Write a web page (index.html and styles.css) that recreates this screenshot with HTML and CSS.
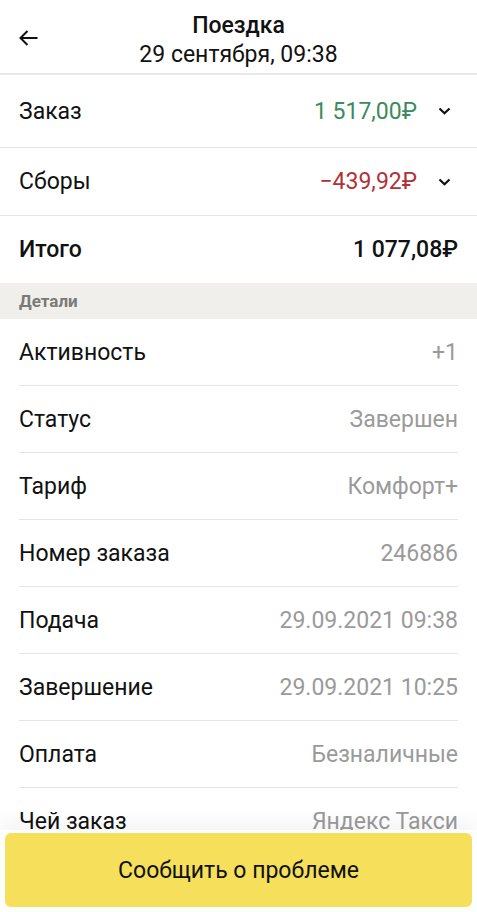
FILE: index.html
```html
<!DOCTYPE html>
<html>
<head>
    <title>Поездка</title>
    <link rel="stylesheet" href="styles.css">
</head>
<body>
    <div class="header">
        <button class="back" aria-label="Назад">
            <svg width="19" height="16" viewBox="0 0 19 16"><path d="M8.5 1 1.5 8l7 7M1.5 8H18.5" fill="none" stroke="#111" stroke-width="2"/></svg>
        </button>
        <div class="title">Поездка</div>
        <div class="subtitle">29 сентября, 09:38</div>
    </div>

    <div class="card">
        <div class="sum-row first">
            <span class="label">Заказ</span>
            <span class="amount green">1 517,00₽</span>
            <svg class="chevron" width="13" height="8" viewBox="0 0 13 8"><path d="M1.5 1.5 6.5 6.2l5-4.7" fill="none" stroke="#111" stroke-width="2.2"/></svg>
        </div>
        <div class="sum-row">
            <span class="label">Сборы</span>
            <span class="amount red">−439,92₽</span>
            <svg class="chevron" width="13" height="8" viewBox="0 0 13 8"><path d="M1.5 1.5 6.5 6.2l5-4.7" fill="none" stroke="#111" stroke-width="2.2"/></svg>
        </div>
        <div class="sum-row total">
            <span class="label">Итого</span>
            <span class="amount">1 077,08₽</span>
        </div>

        <div class="section">Детали</div>

        <div class="details">
            <div class="row"><span>Активность</span><span class="value">+1</span></div>
            <div class="row"><span>Статус</span><span class="value">Завершен</span></div>
            <div class="row"><span>Тариф</span><span class="value">Комфорт+</span></div>
            <div class="row"><span>Номер заказа</span><span class="value">246886</span></div>
            <div class="row"><span>Подача</span><span class="value">29.09.2021 09:38</span></div>
            <div class="row"><span>Завершение</span><span class="value">29.09.2021 10:25</span></div>
            <div class="row"><span>Оплата</span><span class="value">Безналичные</span></div>
            <div class="row"><span>Чей заказ</span><span class="value">Яндекс Такси</span></div>
        </div>
    </div>

    <div class="footer">
        <button class="report">Сообщить о проблеме</button>
    </div>
</body>
</html>
```

FILE: styles.css
```css
body { margin: 0; font-family: Roboto, "Noto Sans", sans-serif; color: #111; background: #fff; height: 912px; overflow: hidden; position: relative; }

.header { height: 75px; position: relative; text-align: center; border-bottom: 2px solid #e9e9e7; box-sizing: border-box; }
.title { padding-top: 12px; font-size: 23px; font-weight: 500; line-height: 28px; }
.subtitle { font-size: 23px; line-height: 30px; }
.back { position: absolute; left: 19px; top: 30px; background: none; border: none; padding: 0; width: 19px; height: 16px; line-height: 0; }

.card { border-radius: 10px 10px 0 0; }

.sum-row { display: flex; align-items: center; height: 67px; padding: 0 26px 0 19px; border-bottom: 1px solid #e4e4e2; font-size: 23px; }
.sum-row.first { height: 72px; }
.sum-row .label { flex: 1; }
.sum-row .chevron { margin-left: 21px; }
.sum-row.total { border-bottom: none; font-weight: 500; padding-right: 19px; height: 67px; }
.green { color: #3d8a5c; }
.red { color: #b03236; }

.section { background: #f0efeb; height: 36px; line-height: 36px; padding: 0 19px; font-size: 17px; font-weight: 700; color: #7a7a78; }

.details { padding: 0 19px; }
.row { display: flex; justify-content: space-between; align-items: center; height: 66px; border-bottom: 1px solid #e4e4e2; font-size: 23px; }
.row .value { color: #9a9a9a; }

.footer { position: absolute; left: 0; right: 0; bottom: 0; padding: 3px 5px 5px; background: #fff; box-shadow: 0 -10px 14px rgba(0,0,0,0.04); display: flex; }
.report { flex: 1; height: 74px; border: none; border-radius: 6px; background: #f5df5b; font-family: Roboto, "Noto Sans", sans-serif; font-size: 23px; color: #111; }
```
